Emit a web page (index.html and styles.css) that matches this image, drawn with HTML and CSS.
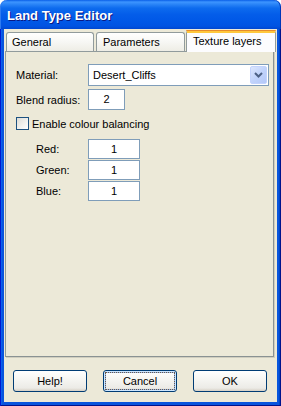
FILE: index.html
```html
<!DOCTYPE html>
<html>
<head>
<meta charset="utf-8">
<link rel="stylesheet" href="styles.css">
</head>
<body>
<div class="window">
  <div class="titlebar"><span class="title">Land Type Editor</span></div>
  <div class="frame">
    <div class="client">
      <div class="tabs">
        <div class="tab tab-general">General</div>
        <div class="tab tab-params">Parameters</div>
        <div class="tab tab-active">Texture layers</div>
      </div>
      <div class="panel">
        <div class="row row-material">
          <span class="label">Material:</span>
          <div class="combo">
            <span class="combo-text">Desert_Cliffs</span>
            <span class="combo-btn">
              <svg width="9" height="6" viewBox="0 0 9 6"><path d="M1 1 L4.5 4.5 L8 1" fill="none" stroke="#4D6185" stroke-width="2"/></svg>
            </span>
          </div>
        </div>
        <div class="row row-blend">
          <span class="label">Blend radius:</span>
          <div class="edit edit-short">2</div>
        </div>
        <div class="row row-check">
          <span class="checkbox"></span>
          <span class="check-label">Enable colour balancing</span>
        </div>
        <div class="sub">
          <div class="row row-color row-first">
            <span class="label sub-label">Red:</span>
            <div class="edit edit-color">1</div>
          </div>
          <div class="row row-color">
            <span class="label sub-label">Green:</span>
            <div class="edit edit-color">1</div>
          </div>
          <div class="row row-color">
            <span class="label sub-label">Blue:</span>
            <div class="edit edit-color">1</div>
          </div>
        </div>
      </div>
      <div class="buttons">
        <button class="btn">Help!</button>
        <button class="btn btn-focus"><span class="focus-ring">Cancel</span></button>
        <button class="btn">OK</button>
      </div>
    </div>
  </div>
</div>
</body>
</html>
```
FILE: styles.css
```css
html, body {
  margin: 0;
  padding: 0;
  background: #ffffff;
}
body {
  font-family: "Liberation Sans", Arial, sans-serif;
  font-size: 11px;
  color: #000;
}
.window {
  width: 281px;
  height: 406px;
  display: flex;
  flex-direction: column;
}
.titlebar {
  height: 29px;
  flex: none;
  border-radius: 7px 7px 0 0;
  background: linear-gradient(to bottom, #0A5FE8 0%, #3D95FF 7%, #2C86F8 14%, #0D6BEE 28%, #045DE9 50%, #0057E6 75%, #0053E2 90%, #0046D0 100%);
  box-shadow: inset 1px 0 #2E7BF0, inset -1px 0 #0036B8;
  display: flex;
  align-items: center;
  padding-left: 7px;
  padding-top: 2px;
  box-sizing: border-box;
}
.title {
  color: #fff;
  font-weight: bold;
  font-size: 13px;
  text-shadow: 1px 1px #0A1883;
}
.frame {
  flex: 1;
  display: flex;
  background: #0855DD;
  padding: 0 4px 4px 4px;
  box-shadow: inset 1px 0 #0019CF, inset -1px 0 #00138C, inset 0 -1px #00138C, inset 2px 0 #0A5FEE, inset -2px 0 #0046C8;
}
.client {
  flex: 1;
  background: #ECE9D8;
  display: flex;
  flex-direction: column;
}
.tabs {
  display: flex;
  height: 21px;
  margin-top: 1px;
  padding-left: 2px;
  align-items: flex-end;
  position: relative;
  z-index: 2;
}
.tab {
  box-sizing: border-box;
  height: 19px;
  border: 1px solid #919B9C;
  border-bottom: none;
  border-radius: 3px 3px 0 0;
  background: linear-gradient(to bottom, #FFFFFF 0%, #F7F7F4 50%, #EEEDE5 100%);
  padding-left: 5px;
  line-height: 18px;
  white-space: nowrap;
}
.tab-general {
  width: 88px;
  margin-right: 2px;
}
.tab-params {
  width: 89px;
  margin-right: 1px;
  padding-left: 6px;
}
.tab-active {
  width: 90px;
  height: 22px;
  margin-bottom: -1px;
  background: #FCFCFE;
  border-top: 3px solid #FFC83C;
  border-radius: 3px 3px 0 0;
  box-shadow: inset 0 -1px #FCFCFE;
  padding-left: 6px;
  line-height: 17px;
  position: relative;
}
.tab-active::before {
  content: "";
  position: absolute;
  left: -1px;
  right: -1px;
  top: -3px;
  height: 1px;
  background: #E68B2C;
  border-radius: 2px 2px 0 0;
}
.panel {
  box-sizing: border-box;
  margin-left: 1px;
  width: 269px;
  height: 306px;
  border: 1px solid #919B9C;
  border-right-color: #8A9293;
  border-bottom-color: #8A9293;
  box-shadow: 1px 1px #D0CEBF;
  background: #ECE9D8;
  padding: 12px 4px 0 10px;
}
.row {
  display: flex;
  align-items: center;
}
.label {
  width: 72px;
  flex: none;
}
.row-material {
  height: 22px;
}
.combo {
  box-sizing: border-box;
  width: 181px;
  height: 22px;
  border: 1px solid #7F9DB9;
  background: #fff;
  display: flex;
  align-items: center;
  justify-content: space-between;
  padding: 1px;
}
.combo-text {
  padding-left: 3px;
}
.combo-btn {
  box-sizing: border-box;
  width: 17px;
  height: 18px;
  border: 1px solid #C3D3FD;
  border-radius: 2px;
  background: linear-gradient(135deg, #DCE6FD 0%, #C1D3FB 50%, #B4C8F8 100%);
  display: flex;
  align-items: center;
  justify-content: center;
}
.edit {
  box-sizing: border-box;
  border: 1px solid #7F9DB9;
  background: #fff;
  text-align: center;
}
.row-blend {
  margin-top: 3px;
  height: 21px;
}
.edit-short {
  width: 37px;
  height: 21px;
  line-height: 19px;
}
.row-check {
  margin-top: 7px;
  height: 13px;
}
.checkbox {
  box-sizing: border-box;
  width: 13px;
  height: 13px;
  border: 1px solid #1C5180;
  background: linear-gradient(135deg, #DCDCD7 0%, #F2F2EF 60%, #FFFFFF 100%);
  flex: none;
}
.check-label {
  margin-left: 3px;
}
.sub {
  padding-left: 20px;
  padding-top: 9px;
  display: flex;
  flex-direction: column;
  gap: 1px;
}
.sub-label {
  width: 52px;
}
.row-color {
  height: 20px;
}
.edit-color {
  width: 52px;
  height: 20px;
  line-height: 18px;
}
.buttons {
  margin-top: 13px;
  padding-left: 9px;
  display: flex;
  gap: 16px;
}
.btn {
  box-sizing: border-box;
  width: 74px;
  height: 22px;
  border: 1px solid #003C74;
  border-radius: 3px;
  background: linear-gradient(to bottom, #FFFFFF 0%, #F6F6F3 40%, #ECEBE6 85%, #D6D0C5 100%);
  font-family: "Liberation Sans", Arial, sans-serif;
  font-size: 11px;
  color: #000;
  padding: 0;
  margin: 0;
  display: flex;
  align-items: center;
  justify-content: center;
}
.btn-focus {
  box-shadow: inset 0 0 0 1px #CEE7FF, inset 0 0 0 2px #98B8EA;
  padding: 1px;
}
.focus-ring {
  box-sizing: border-box;
  flex: 1;
  align-self: stretch;
  border: 1px dotted #6B5A4A;
  display: flex;
  align-items: center;
  justify-content: center;
}
```
